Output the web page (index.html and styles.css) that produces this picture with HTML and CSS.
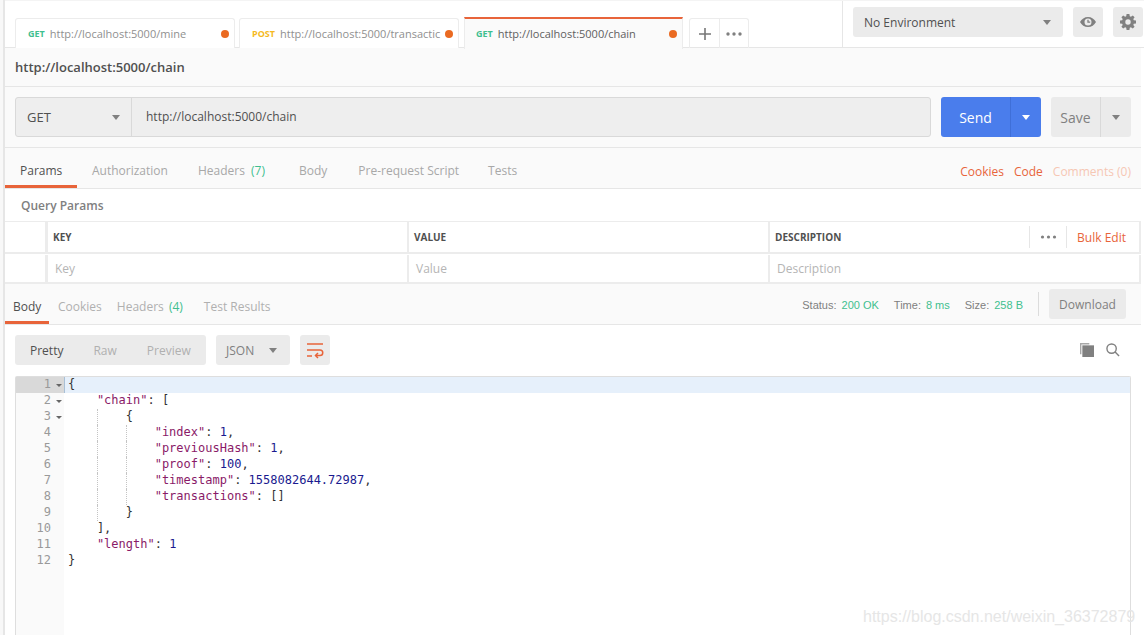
FILE: index.html
```html
<!DOCTYPE html>
<html lang="en">
<head>
<meta charset="utf-8">
<title>Postman</title>
<link rel="stylesheet" href="styles.css">
</head>
<body>
<div class="page">
  <div class="rail"></div>
  <div class="main">
    <header class="topbar">
      <div class="tabs">
        <div class="tab"><span class="verb get">GET</span><span class="tab-url">http://localhost:5000/mine</span><span class="dot"></span></div>
        <div class="tab"><span class="verb post">POST</span><span class="tab-url">http://localhost:5000/transactic</span><span class="dot"></span></div>
        <div class="tab tab-active"><span class="verb get">GET</span><span class="tab-url">http://localhost:5000/chain</span><span class="dot"></span></div>
        <div class="tab-tools">
          <div class="tool"><svg width="14" height="14" viewBox="0 0 14 14"><path d="M7 1v12M1 7h12" stroke="#777" stroke-width="1.6" fill="none"/></svg></div>
          <div class="tool"><svg width="18" height="4" viewBox="0 0 18 4"><circle cx="3" cy="2" r="1.7" fill="#808080"/><circle cx="9" cy="2" r="1.7" fill="#808080"/><circle cx="15" cy="2" r="1.7" fill="#808080"/></svg></div>
        </div>
      </div>
      <div class="env">
        <div class="env-select"><span>No Environment</span><i class="caret"></i></div>
        <div class="icon-btn"><svg width="16" height="10" viewBox="0 0 16 10"><path fill-rule="evenodd" fill="#808080" d="M8 0C4.5 0 1.6 2 0 5c1.6 3 4.5 5 8 5s6.4-2 8-5c-1.600-3-4.500-5-8-5zm0 1.500a3.500 3.500 0 1 1 0 7 3.500 3.500 0 0 1 0-7z"/><path d="M8 2.800v2.400h2.200" stroke="#808080" stroke-width="1.300" fill="none"/></svg></div>
        <div class="icon-btn"><svg width="16" height="16" viewBox="0 0 16 16"><path fill="#808080" fill-rule="evenodd" d="M6.600 0h2.800l.4 2.200 1.100.5L12.800 1.400l1.800 1.800-1.300 1.900.5 1.100 2.200.4v2.800l-2.200.4-.5 1.100 1.300 1.900-1.800 1.800-1.900-1.300-1.100.5-.4 2.200H6.600l-.4-2.200-1.100-.5-1.900 1.300-1.800-1.800 1.300-1.900-.5-1.100L0 9.400V6.600l2.200-.4.500-1.100L1.400 3.200l1.800-1.800 1.900 1.300 1.100-.5zM8 5.300a2.700 2.700 0 1 0 0 5.400 2.700 2.700 0 0 0 0-5.400z"/></svg></div>
      </div>
    </header>

    <div class="content">
      <div class="title-row">http://localhost:5000/chain</div>

      <div class="request-row">
        <div class="url-box">
          <div class="method"><span>GET</span><i class="caret"></i></div>
          <div class="url">http://localhost:5000/chain</div>
        </div>
        <div class="send"><span class="send-label">Send</span><span class="send-more"><i class="caret caret-white"></i></span></div>
        <div class="save"><span class="save-label">Save</span><span class="save-more"><i class="caret"></i></span></div>
      </div>

      <nav class="req-tabs">
        <span class="rt rt-active">Params</span>
        <span class="rt">Authorization</span>
        <span class="rt">Headers <em class="count">(7)</em></span>
        <span class="rt rt-body">Body</span>
        <span class="rt rt-pre">Pre-request Script</span>
        <span class="rt">Tests</span>
        <span class="req-links"><span>Cookies</span><span>Code</span><span class="faded">Comments (0)</span></span>
      </nav>

      <section class="params">
        <div class="params-title">Query Params</div>
        <div class="ptable">
          <div class="prow prow-head">
            <div class="cell cell-check"></div>
            <div class="cell cell-key">KEY</div>
            <div class="cell cell-value">VALUE</div>
            <div class="cell cell-desc"><span>DESCRIPTION</span>
              <span class="head-tools">
                <span class="head-more"><svg width="17" height="4" viewBox="0 0 17 4"><circle cx="2.500" cy="2" r="1.600" fill="#808080"/><circle cx="8.500" cy="2" r="1.600" fill="#808080"/><circle cx="14.500" cy="2" r="1.600" fill="#808080"/></svg></span>
                <span class="bulk">Bulk Edit</span>
              </span>
            </div>
          </div>
          <div class="prow prow-body">
            <div class="cell cell-check"></div>
            <div class="cell cell-key">Key</div>
            <div class="cell cell-value">Value</div>
            <div class="cell cell-desc">Description</div>
          </div>
        </div>
      </section>

      <nav class="res-tabs">
        <span class="st st-active">Body</span>
        <span class="st">Cookies</span>
        <span class="st">Headers <em class="count">(4)</em></span>
        <span class="st st-last">Test Results</span>
        <span class="meta">
          <span class="meta-l">Status:</span><span class="meta-v">200 OK</span>
          <span class="meta-l">Time:</span><span class="meta-v">8 ms</span>
          <span class="meta-l">Size:</span><span class="meta-v">258 B</span>
        </span>
        <span class="download">Download</span>
      </nav>

      <section class="response">
        <div class="toolbar">
          <div class="views"><span class="v-on">Pretty</span><span>Raw</span><span>Preview</span></div>
          <div class="lang"><span>JSON</span><i class="caret"></i></div>
          <div class="wrap"><svg width="16" height="14" viewBox="0 0 16 14" fill="none" stroke="#e8643a" stroke-width="1.500"><path d="M0 1h16M0 7h13a2.700 2.700 0 0 1 0 5.500H9"/><path d="M0 13h5"/><path d="M11 10l-2.500 2.500L11 15"/></svg></div>
          <div class="tool-right">
            <svg width="14" height="14" viewBox="0 0 15 15"><path fill="#a8a8a8" d="M0 0h10v1.500H1.500V12H0z"/><path fill="#808080" d="M2.500 2.500H15V15H2.500z"/></svg>
            <svg width="14" height="14" viewBox="0 0 15 15" fill="none" stroke="#808080" stroke-width="1.500"><circle cx="6" cy="6" r="5"/><path d="M9.500 9.500L14 14"/></svg>
          </div>
        </div>

        <div class="editor">
          <div class="gutter">
            <div class="gl gl-on">1<i class="fold"></i></div>
            <div class="gl">2<i class="fold"></i></div>
            <div class="gl">3<i class="fold"></i></div>
            <div class="gl">4</div>
            <div class="gl">5</div>
            <div class="gl">6</div>
            <div class="gl">7</div>
            <div class="gl">8</div>
            <div class="gl">9</div>
            <div class="gl">10</div>
            <div class="gl">11</div>
            <div class="gl">12</div>
          </div>
          <div class="code">
            <div class="ln ln-on">{</div>
            <div class="ln"><span class="in"></span><b class="s">"chain"</b>: [</div>
            <div class="ln"><span class="in"></span><span class="in g"></span>{</div>
            <div class="ln"><span class="in"></span><span class="in g"></span><span class="in g"></span><b class="s">"index"</b>: <b class="n">1</b>,</div>
            <div class="ln"><span class="in"></span><span class="in g"></span><span class="in g"></span><b class="s">"previousHash"</b>: <b class="n">1</b>,</div>
            <div class="ln"><span class="in"></span><span class="in g"></span><span class="in g"></span><b class="s">"proof"</b>: <b class="n">100</b>,</div>
            <div class="ln"><span class="in"></span><span class="in g"></span><span class="in g"></span><b class="s">"timestamp"</b>: <b class="n">1558082644.72987</b>,</div>
            <div class="ln"><span class="in"></span><span class="in g"></span><span class="in g"></span><b class="s">"transactions"</b>: []</div>
            <div class="ln"><span class="in"></span><span class="in g"></span>}</div>
            <div class="ln"><span class="in"></span>],</div>
            <div class="ln"><span class="in"></span><b class="s">"length"</b>: <b class="n">1</b></div>
            <div class="ln">}</div>
          </div>
        </div>
      </section>
    </div>
  </div>
</div>
<div class="watermark">https://blog.csdn.net/weixin_36372879</div>
</body>
</html>
```

FILE: styles.css
```css
* { box-sizing: border-box; }
html, body { margin: 0; height: 635px; overflow: hidden; background: #fff; }
body { font: 12px/16px "Open Sans", sans-serif; color: #505050; position: relative; }
i, em, b { font-style: normal; font-weight: normal; }

.page { display: flex; height: 635px; }
.rail { width: 5px; flex: none; background: #f8f8f8; border-right: 2px solid #e6e6e6; }
.main { flex: 1; min-width: 0; display: flex; flex-direction: column; }

.caret { display: inline-block; width: 0; height: 0; border-left: 4px solid transparent; border-right: 4px solid transparent; border-top: 5px solid #808080; }
.caret-white { border-top-color: #fff; }

/* top bar */
.topbar { height: 48px; flex: none; display: flex; border-top: 1px solid #f4f4f4; border-bottom: 1px solid #e6e6e6; background: #fff; }
.tabs { width: 838px; flex: none; display: flex; align-items: flex-end; padding-left: 10px; border-right: 1px solid #e6e6e6; height: 47px; }
.tab { width: 220px; height: 30px; margin-right: 4px; padding: 0 5px 0 12px; display: flex; align-items: center; background: #fff; border: 1px solid #ececec; border-bottom: 0; border-radius: 3px 3px 0 0; font-size: 11px; color: #8f8f8f; }
.tab-active { width: 219px; margin-left: 1px; margin-right: 6px; padding-left: 11px; border-top: 2px solid #e8643a; border-radius: 0; background: #fafafa; color: #606060; margin-bottom: -1px; height: 32px; position: relative; }
.verb { font-size: 9px; font-weight: 700; margin-right: 5px; flex: none; }
.get { color: #3fbf8f; }
.post { color: #f5b921; }
.tab-url { flex: 1; overflow: hidden; white-space: nowrap; font-size: 11px; }
.dot { width: 8px; height: 8px; border-radius: 50%; background: #ea6a21; margin-left: 2px; flex: none; }
.tab-tools { display: flex; height: 30px; border: 1px solid #ececec; border-bottom: 0; border-radius: 3px 3px 0 0; }
.tool { width: 29px; display: flex; align-items: center; justify-content: center; }
.tool + .tool { border-left: 1px solid #ececec; }
.env { display: flex; flex: 1; padding: 6px 0 0 10px; gap: 10px; }
.env-select { width: 210px; height: 30px; background: #ebebeb; border-radius: 3px; padding: 0 12px 0 11px; display: flex; align-items: center; justify-content: space-between; color: #505050; }
.env-select span { padding-top: 2px; }
.icon-btn { width: 30px; height: 30px; flex: none; background: #ebebeb; border-radius: 3px; display: flex; align-items: center; justify-content: center; }

/* content */
.content { flex: 1; min-height: 0; margin-right: 3px; background: #fafafa; display: flex; flex-direction: column; }
.title-row { height: 39px; flex: none; padding: 11px 10px 0; font-size: 13px; font-weight: 600; color: #505050; border-bottom: 1px solid #e6e6e6; }
.request-row { height: 61px; flex: none; padding: 10px 10px; display: flex; border-bottom: 1px solid #e6e6e6; }
.url-box { width: 916px; height: 40px; display: flex; background: #eeeeee; border: 1px solid #d9d9d9; border-radius: 3px; flex: none; }
.method { width: 116px; flex: none; display: flex; align-items: center; justify-content: space-between; padding: 0 11px; border-right: 1px solid #d9d9d9; font-size: 13px; font-weight: 500; color: #505050; }
.url { padding: 0 14px; line-height: 37px; color: #505050; }
.send { width: 100px; height: 40px; margin-left: 10px; display: flex; background: #4a7dec; border-radius: 3px; color: #fff; font-size: 14px; font-weight: 500; }
.send-label { width: 70px; text-align: center; line-height: 41px; border-right: 1px solid #3f6fd8; }
.send-more { flex: 1; display: flex; align-items: center; justify-content: center; }
.save { width: 80px; height: 40px; margin-left: 10px; display: flex; background: #ebebeb; border-radius: 3px; color: #808080; font-size: 14px; font-weight: 500; }
.save-label { width: 50px; text-align: center; line-height: 41px; border-right: 1px solid #d9d9d9; }
.save-more { flex: 1; display: flex; align-items: center; justify-content: center; }

/* request tabs */
.req-tabs { height: 41px; flex: none; display: flex; align-items: flex-start; border-bottom: 1px solid #e6e6e6; line-height: 16px; }
.rt { padding: 15px 15px 0; height: 40px; color: #a8a8a8; }
.rt-active { color: #505050; border-bottom: 3px solid #e8643a; width: 72px; }
.rt-body { margin: 0 1px 0 4px; }
.rt-pre { padding-right: 14px; }
.count { color: #3fbf8f; margin-left: 2px; }
.req-tabs .count { margin-left: 3px; }
.req-links { margin-left: auto; padding: 16px 10px 0 0; display: flex; gap: 10px; color: #e8643a; }
.faded { color: #f6c7b4; }

/* params */
.params { flex: none; height: 95px; background: #fff; }
.params-title { height: 32px; padding: 9px 0 0 16px; font-weight: 600; color: #808080; }
.ptable { border-top: 1px solid #ececec; }
.prow { display: flex; border-bottom: 2px solid #ececec; }
.prow-head { height: 32px; font-size: 10px; font-weight: 700; color: #505050; }
.prow-body { height: 30px; padding-top: 1px; color: #b5b5b5; }
.prow-body .cell { padding-top: 1px; }
.cell { padding-left: 5px; display: flex; align-items: center; border-right: 2px solid #ececec; }
.cell-check { width: 43px; border-right: 3px solid #ececec; flex: none; }
.cell-key { width: 361px; flex: none; }
.cell-value { width: 361px; flex: none; }
.cell-desc { flex: 1; justify-content: space-between; }
.prow-body .cell-key, .prow-body .cell-value, .prow-body .cell-desc { padding-left: 7px; }
.head-tools { display: flex; align-items: center; height: 22px; font-size: 12px; font-weight: 400; }
.head-more { width: 38px; height: 22px; display: flex; align-items: center; justify-content: center; border-left: 1px solid #e6e6e6; border-right: 1px solid #e6e6e6; }
.bulk { color: #e8643a; padding: 2px 13px 0 10px; }

/* response tabs */
.res-tabs { height: 41px; flex: none; display: flex; align-items: flex-start; border-bottom: 1px solid #e6e6e6; }
.st { padding: 15px 16px 0 0; height: 40px; color: #b0b0b0; }
.st-active { color: #505050; padding: 15px 7px 0 8px; width: 44px; border-bottom: 3px solid #e8643a; margin-right: 9px; }
.st:nth-child(2) { padding-right: 15px; }
.st:nth-child(3) { padding-right: 21px; }
.meta { margin: 0 10px 0 auto; padding-top: 13px; font: 11px/16px "Liberation Sans", sans-serif; display: flex; }
.meta-l { color: #808080; margin-right: 5px; }
.meta-v { color: #3fbf8f; margin-right: 15px; }
.meta-v:last-child { margin-right: 0; padding-right: 15px; border-right: 1px solid #dcdcdc; height: 24px; margin-top: -5px; padding-top: 5px; }
.download { width: 77px; height: 30px; margin: 5px 15px 0 0; background: #ebebeb; border-radius: 3px; text-align: center; line-height: 31px; color: #808080; }

/* response */
.response { flex: 1; min-height: 0; background: #fff; padding: 10px 10px 0; display: flex; flex-direction: column; }
.toolbar { height: 31px; flex: none; display: flex; gap: 10px; margin-bottom: 10px; }
.views { width: 191px; height: 30px; background: #ebebeb; border-radius: 3px; display: flex; align-items: center; padding: 2px 0 0 15px; gap: 30px; color: #b0b0b0; }
.v-on { color: #505050; }
.lang { width: 74px; height: 30px; background: #ebebeb; border-radius: 3px; display: flex; align-items: center; justify-content: space-between; padding: 0 13px 0 10px; color: #808080; }
.lang span { padding-top: 2px; }
.wrap { width: 30px; height: 30px; background: #ebebeb; border-radius: 3px; display: flex; align-items: center; justify-content: center; }
.wrap svg { overflow: visible; }
.tool-right { margin-left: auto; display: flex; align-items: center; gap: 12px; height: 30px; padding-right: 11px; }

.editor { flex: 1; min-height: 0; display: flex; width: 1116px; border: 1px solid #dedede; border-bottom: 0; border-radius: 2px 2px 0 0; font: 12px/15px "DejaVu Sans Mono", monospace; color: #333; }
.gutter { width: 48px; flex: none; background: #fafafa; color: #999; }
.gl { height: 16px; padding-right: 13px; text-align: right; position: relative; }
.gl-on { background: #d9d9d9; }
.fold { position: absolute; right: 2px; top: 7px; width: 0; height: 0; border-left: 3px solid transparent; border-right: 3px solid transparent; border-top: 3px solid #666; }
.code { flex: 1; min-width: 0; }
.ln { height: 16px; padding-left: 4px; white-space: pre; }
.ln-on { background: #e6f0fb; box-shadow: inset 1px 0 0 #a9c0d6; }
.in { display: inline-block; width: 4ch; height: 16px; vertical-align: top; }
.g { border-left: 1px dotted #c4c4c4; }
.s { color: #8a1a68; }
.n { color: #1a1a8f; }

.watermark { position: absolute; left: 863px; top: 608px; font: 16px/18px "Liberation Sans", sans-serif; color: #e6e6e6; white-space: nowrap; }
```
